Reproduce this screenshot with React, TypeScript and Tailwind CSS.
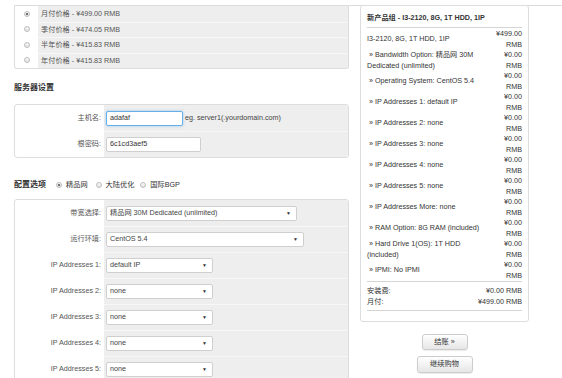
import React from "react";

const font = { fontFamily: '"Liberation Sans", "Noto Sans CJK SC", Arial, sans-serif' };

const Radio = ({ checked = false }: { checked?: boolean }) => (
  <span className="inline-flex h-[6px] w-[6px] items-center justify-center rounded-full border border-[#bdbdbd] bg-gradient-to-b from-[#fafafa] to-[#e2e2e2]">
    {checked && <span className="h-[2px] w-[2px] rounded-full bg-[#444]" />}
  </span>
);

const Select = ({ value, width }: { value: string; width: string }) => (
  <div
    className={`flex h-[15px] items-center justify-between rounded-[2px] border border-[#cfcfcf] bg-white pl-[3px] pr-[5px] text-[#444] ${width}`}
  >
    <span>{value}</span>
    <span className="text-[5px] text-[#333]">▼</span>
  </div>
);

const cycles = [
  { label: "月付价格 - ¥499.00 RMB", checked: true },
  { label: "季付价格 - ¥474.05 RMB" },
  { label: "半年价格 - ¥415.83 RMB" },
  { label: "年付价格 - ¥415.83 RMB" },
];

const options = [
  { label: "带宽选择:", value: "精品网 30M Dedicated (unlimited)", width: "w-[191px]" },
  { label: "运行环境:", value: "CentOS 5.4", width: "w-[198px]" },
  { label: "IP Addresses 1:", value: "default IP", width: "w-[107px]" },
  { label: "IP Addresses 2:", value: "none", width: "w-[107px]" },
  { label: "IP Addresses 3:", value: "none", width: "w-[107px]" },
  { label: "IP Addresses 4:", value: "none", width: "w-[107px]" },
  { label: "IP Addresses 5:", value: "none", width: "w-[107px]" },
];

const summary = [
  { text: "I3-2120, 8G, 1T HDD, 1IP", price: "¥499.00", base: true },
  { text: "» Bandwidth Option: 精品网 30M Dedicated (unlimited)", price: "¥0.00" },
  { text: "» Operating System: CentOS 5.4", price: "¥0.00" },
  { text: "» IP Addresses 1: default IP", price: "¥0.00" },
  { text: "» IP Addresses 2: none", price: "¥0.00" },
  { text: "» IP Addresses 3: none", price: "¥0.00" },
  { text: "» IP Addresses 4: none", price: "¥0.00" },
  { text: "» IP Addresses 5: none", price: "¥0.00" },
  { text: "» IP Addresses More: none", price: "¥0.00" },
  { text: "» RAM Option: 8G RAM (included)", price: "¥0.00" },
  { text: "» Hard Drive 1(OS): 1T HDD (included)", price: "¥0.00" },
  { text: "» IPMI: No IPMI", price: "¥0.00" },
];

export default function App() {
  return (
    <div className="h-[378px] w-[562px] overflow-hidden bg-white text-[7.2px] leading-[10.5px] text-[#333]" style={font}>
      <div className="ml-[14px] mt-[5px] flex items-start border-t border-[#dcdcdc]">
        {/* left column */}
        <div className="w-[335px]">
          <div className="overflow-hidden rounded-b-[3px] border border-t-0 border-[#dddddd] bg-white">
            {cycles.map((c, i) => (
              <div key={i} className="flex h-[15.5px]">
                <div className="flex w-[23px] items-center justify-center">
                  <Radio checked={c.checked} />
                </div>
                <div className={`flex flex-1 items-center bg-[#eeeeee] pl-[3px] text-[#555] ${i > 0 ? "border-t border-[#f7f7f7]" : ""}`}>
                  {c.label}
                </div>
              </div>
            ))}
          </div>

          <h3 className="mt-[13px] mb-[10px] text-[8px] font-bold leading-[12px] text-[#333]">服务器设置</h3>
          <div className="overflow-hidden rounded-[3px] border border-[#dddddd] bg-white">
            <div className="flex h-[26px]">
              <div className="flex w-[89px] items-center justify-end pr-[3px] text-[#555]">主机名:</div>
              <div className="flex flex-1 items-center bg-[#eeeeee] pl-[2px]">
                <div className="flex h-[15px] w-[77px] items-center rounded-[2px] border border-[#66afe9] bg-white pl-[3px] shadow-[0_0_3px_rgba(102,175,233,0.6)]">
                  adafaf
                </div>
                <span className="ml-[2px] text-[#444]">eg. server1(.yourdomain.com)</span>
              </div>
            </div>
            <div className="flex h-[26px]">
              <div className="flex w-[89px] items-center justify-end pr-[3px] text-[#555]">根密码:</div>
              <div className="flex flex-1 items-center border-t border-[#f7f7f7] bg-[#eeeeee] pl-[2px]">
                <div className="flex h-[15px] w-[95px] items-center rounded-[2px] border border-[#cfcfcf] bg-white pl-[3px]">
                  6c1cd3aef5
                </div>
              </div>
            </div>
          </div>

          <div className="mt-[21px] mb-[8px] flex items-center gap-[4px] leading-[12px]">
            <h3 className="mr-[6px] text-[8px] font-bold text-[#333]">配置选项</h3>
            <Radio checked />
            <span className="mr-[4px]">精品网</span>
            <Radio />
            <span className="mr-[2px]">大陆优化</span>
            <Radio />
            <span>国际BGP</span>
          </div>
          <div className="overflow-hidden rounded-t-[3px] border border-[#dddddd] bg-white">
            {options.map((o, i) => (
              <div key={i} className="flex h-[26px]">
                <div className="flex w-[89px] items-center justify-end pr-[3px] text-[#555]">{o.label}</div>
                <div className={`flex flex-1 items-center bg-[#eeeeee] pl-[2px] ${i > 0 ? "border-t border-[#f7f7f7]" : ""}`}>
                  <Select value={o.value} width={o.width} />
                </div>
              </div>
            ))}
          </div>
        </div>

        {/* right column */}
        <div className="ml-[11px] flex w-[169px] flex-col items-center">
          <div className="-mt-px w-full rounded-[3px] border border-[#dddddd] bg-white px-[6px] pt-[6px] pb-[10px]">
            <div className="border-b border-[#d5d5d5] pb-[3px] font-bold leading-[12px]">
              新产品组 - I3-2120, 8G, 1T HDD, 1IP
            </div>
            <div className="pt-[1px]">
              {summary.map((s, i) => (
                <div key={i} className="flex h-[21px] items-center">
                  <div className={`flex-1 pr-[4px] ${s.base ? "" : "indent-[2px]"}`}>{s.text}</div>
                  <div className="w-[34px] text-right">
                    {s.price}
                    <br />
                    RMB
                  </div>
                </div>
              ))}
            </div>
            <div className="border-y border-[#d5d5d5] py-[3px] leading-[11px]">
              <div className="flex justify-between">
                <span>安装费:</span>
                <span>¥0.00 RMB</span>
              </div>
              <div className="flex justify-between">
                <span>月付:</span>
                <span>¥499.00 RMB</span>
              </div>
            </div>
          </div>
          <button className="mt-[12px] h-[16px] w-[46px] rounded-[3px] border border-[#cccccc] bg-gradient-to-b from-white to-[#e6e6e6] text-[7.2px] text-[#333] shadow-[0_1px_1px_rgba(0,0,0,0.08)]">
            结账 »
          </button>
          <button className="mt-[6px] h-[17px] w-[56px] rounded-[3px] border border-[#cccccc] bg-gradient-to-b from-white to-[#e6e6e6] text-[7.2px] text-[#333] shadow-[0_1px_1px_rgba(0,0,0,0.08)]">
            继续购物
          </button>
        </div>
      </div>
    </div>
  );
}
